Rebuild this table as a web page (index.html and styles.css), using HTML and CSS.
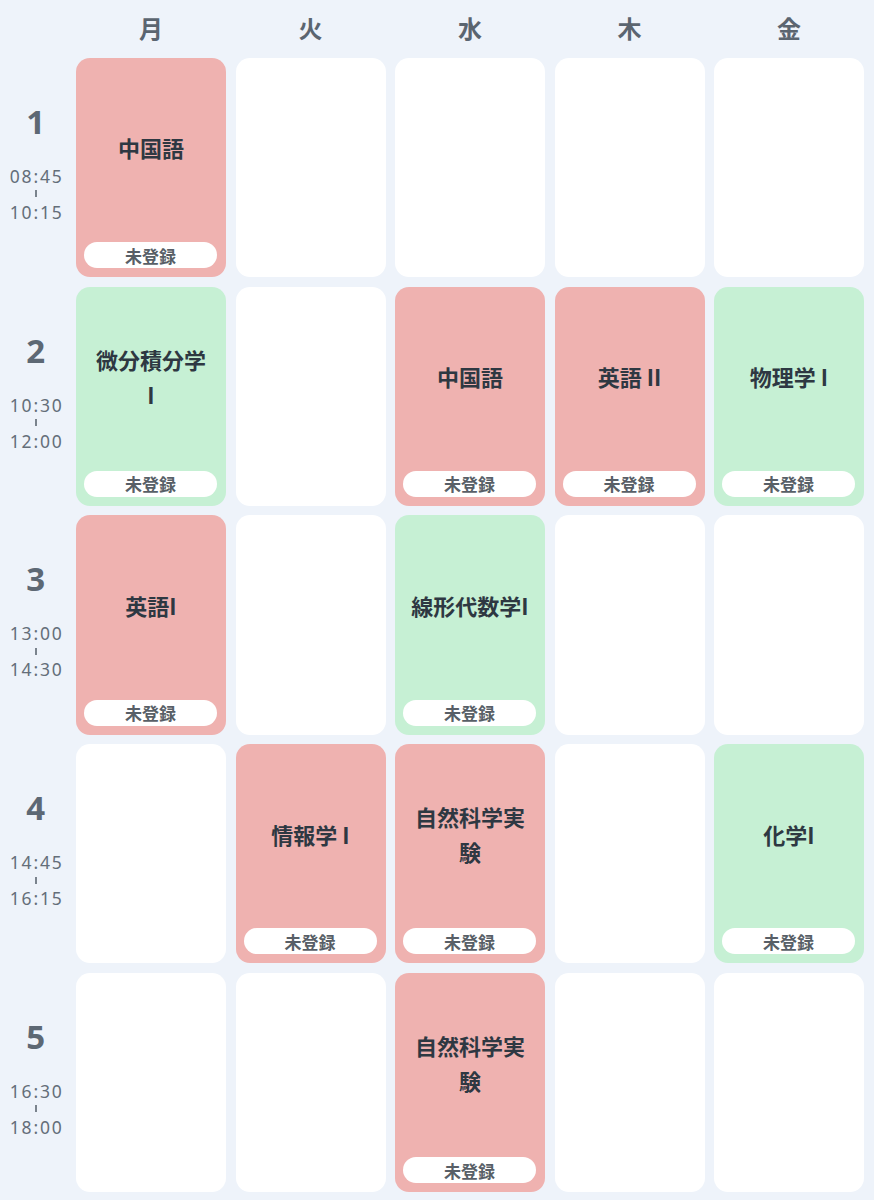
FILE: index.html
```html
<!DOCTYPE html>
<html lang="ja">
<head>
<meta charset="utf-8">
<title>時間割</title>
<link rel="stylesheet" href="styles.css">
</head>
<body>
<div class="timetable">
  <div class="corner"></div>
  <div class="day">月</div>
  <div class="day">火</div>
  <div class="day">水</div>
  <div class="day">木</div>
  <div class="day">金</div>

  <div class="period"><div class="num">1</div><div class="time">08:45</div><div class="bar"></div><div class="time">10:15</div></div>
  <div class="cell red"><div class="title">中国語</div><div class="badge">未登録</div></div>
  <div class="cell empty"></div>
  <div class="cell empty"></div>
  <div class="cell empty"></div>
  <div class="cell empty"></div>

  <div class="period"><div class="num">2</div><div class="time">10:30</div><div class="bar"></div><div class="time">12:00</div></div>
  <div class="cell green"><div class="title">微分積分学 I</div><div class="badge">未登録</div></div>
  <div class="cell empty"></div>
  <div class="cell red"><div class="title">中国語</div><div class="badge">未登録</div></div>
  <div class="cell red"><div class="title">英語 II</div><div class="badge">未登録</div></div>
  <div class="cell green"><div class="title">物理学 I</div><div class="badge">未登録</div></div>

  <div class="period"><div class="num">3</div><div class="time">13:00</div><div class="bar"></div><div class="time">14:30</div></div>
  <div class="cell red"><div class="title">英語I</div><div class="badge">未登録</div></div>
  <div class="cell empty"></div>
  <div class="cell green"><div class="title">線形代数学I</div><div class="badge">未登録</div></div>
  <div class="cell empty"></div>
  <div class="cell empty"></div>

  <div class="period"><div class="num">4</div><div class="time">14:45</div><div class="bar"></div><div class="time">16:15</div></div>
  <div class="cell empty"></div>
  <div class="cell red"><div class="title">情報学 I</div><div class="badge">未登録</div></div>
  <div class="cell red"><div class="title">自然科学実験</div><div class="badge">未登録</div></div>
  <div class="cell empty"></div>
  <div class="cell green"><div class="title">化学I</div><div class="badge">未登録</div></div>

  <div class="period"><div class="num">5</div><div class="time">16:30</div><div class="bar"></div><div class="time">18:00</div></div>
  <div class="cell empty"></div>
  <div class="cell empty"></div>
  <div class="cell red"><div class="title">自然科学実験</div><div class="badge">未登録</div></div>
  <div class="cell empty"></div>
  <div class="cell empty"></div>
</div>
</body>
</html>
```

FILE: styles.css
```css
html, body {
  margin: 0;
  padding: 0;
  background: #eef3fa;
}
body {
  font-family: "Noto Sans CJK JP", "Noto Sans", sans-serif;
  color: #2f3a44;
}
.timetable {
  display: grid;
  grid-template-columns: 66.5px repeat(5, 150px);
  grid-template-rows: 48.25px repeat(5, 219.25px);
  column-gap: 9.5px;
  row-gap: 9.5px;
  width: 874px;
  height: 1200px;
  box-sizing: border-box;
}
.day {
  display: flex;
  align-items: center;
  justify-content: center;
  padding-top: 6px;
  font-size: 24px;
  font-weight: 700;
  color: #5b6570;
}
.period {
  display: flex;
  flex-direction: column;
  align-items: center;
  justify-content: center;
  padding-bottom: 10px;
  padding-left: 5px;
  color: #5e6975;
}
.num {
  font-family: "Noto Sans", sans-serif;
  font-size: 33px;
  font-weight: 700;
  line-height: 36px;
  margin-bottom: 27px;
  color: #5d6874;
}
.time {
  font-family: "Noto Sans", sans-serif;
  font-size: 17.5px;
  line-height: 18px;
  letter-spacing: 1.8px;
  margin-right: -1.8px;
  color: #646e79;
}
.bar {
  width: 1.5px;
  height: 7px;
  margin: 5.5px 0;
  background: #7a838d;
}
.cell {
  border-radius: 14px;
  display: flex;
  flex-direction: column;
}
.empty {
  background: #ffffff;
}
.red {
  background: #efb2b0;
}
.green {
  background: #c6f0d4;
}
.title {
  flex: 1;
  display: flex;
  align-items: center;
  justify-content: center;
  text-align: center;
  padding: 0 15px 4px;
  font-size: 22px;
  font-weight: 700;
  line-height: 35px;
  color: #2e3842;
}
.badge {
  height: 26px;
  margin: 0 9px 9px 8px;
  border-radius: 13px;
  background: #ffffff;
  display: flex;
  align-items: center;
  justify-content: center;
  font-size: 17px;
  font-weight: 700;
  color: #585f67;
}
```
